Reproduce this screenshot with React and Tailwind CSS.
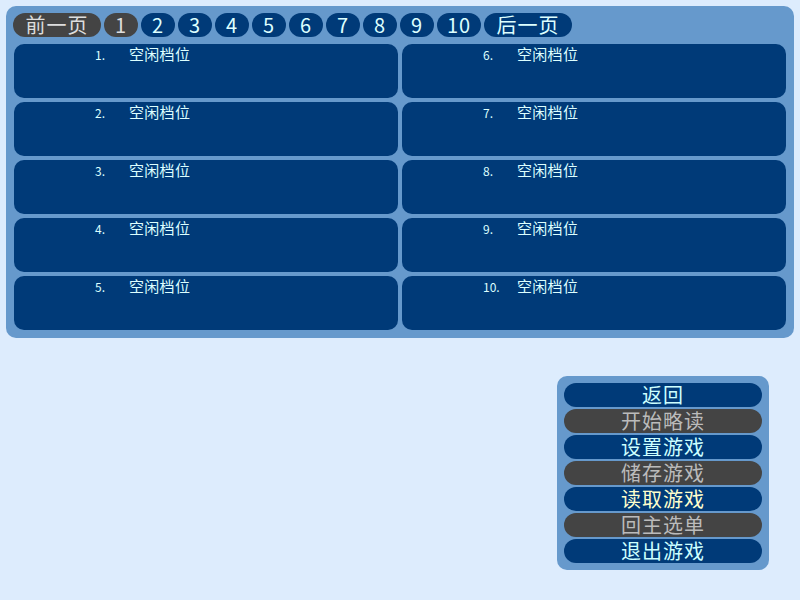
import React from "react";

const pages = ["1", "2", "3", "4", "5", "6", "7", "8", "9", "10"];

const menu = [
  { label: "返回", kind: "blue" },
  { label: "开始略读", kind: "gray" },
  { label: "设置游戏", kind: "blue" },
  { label: "储存游戏", kind: "gray" },
  { label: "读取游戏", kind: "active" },
  { label: "回主选单", kind: "gray" },
  { label: "退出游戏", kind: "blue" },
];

function NavButton({ label, gray, className }) {
  return (
    <button
      type="button"
      className={
        "flex h-[24px] items-center justify-center rounded-full text-[20px] leading-[20px] tracking-[1px] " +
        (gray ? "bg-[#444444] text-[#dddddd] " : "bg-[#003a78] text-[#ddffff] ") +
        className
      }
    >
      {label}
    </button>
  );
}

function Slot({ n }) {
  return (
    <div className="h-[54px] rounded-[10px] bg-[#003a78] text-[#ddffff]">
      <div className="flex items-baseline pt-[1px]">
        <span className="ml-[81px] w-[34px] text-[12px] leading-[18px]">{n}.</span>
        <span className="text-[15px] leading-[18px] tracking-[0.3px]">空闲档位</span>
      </div>
    </div>
  );
}

export default function App() {
  const left = [1, 2, 3, 4, 5];
  const right = [6, 7, 8, 9, 10];

  return (
    <div
      className="h-[600px] w-[800px] overflow-hidden bg-[#ddecfd] pt-[6px]"
      style={{ fontFamily: '"Noto Sans CJK SC", "DejaVu Sans", sans-serif' }}
    >
      <div className="mx-[6px] h-[332px] rounded-[10px] bg-[#6699cc] px-[8px] pt-[7px]">
        <div className="-ml-[1px] flex h-[24px] gap-[3px]">
          <NavButton label="前一页" gray className="w-[88px]" />
          {pages.map((p) => (
            <NavButton
              key={p}
              label={p}
              gray={p === "1"}
              className={p === "10" ? "w-[44px]" : "w-[34px]"}
            />
          ))}
          <NavButton label="后一页" className="w-[88px]" />
        </div>
        <div className="mt-[7px] grid grid-cols-2 gap-x-[4px]">
          <div className="flex flex-col gap-[4px]">
            {left.map((n) => (
              <Slot key={n} n={n} />
            ))}
          </div>
          <div className="flex flex-col gap-[4px]">
            {right.map((n) => (
              <Slot key={n} n={n} />
            ))}
          </div>
        </div>
      </div>

      <div className="ml-[557px] mt-[38px] flex w-[212px] flex-col gap-[2px] rounded-[10px] bg-[#6699cc] p-[7px]">
        {menu.map((m) => (
          <button
            key={m.label}
            type="button"
            className={
              "flex h-[24px] items-center justify-center rounded-full text-[20px] leading-[20px] tracking-[1px] " +
              (m.kind === "gray"
                ? "bg-[#444444] text-[#bbbbbb]"
                : m.kind === "active"
                ? "bg-[#003a78] text-[#ffffcc]"
                : "bg-[#003a78] text-[#ccffff]")
            }
          >
            {m.label}
          </button>
        ))}
      </div>
    </div>
  );
}
